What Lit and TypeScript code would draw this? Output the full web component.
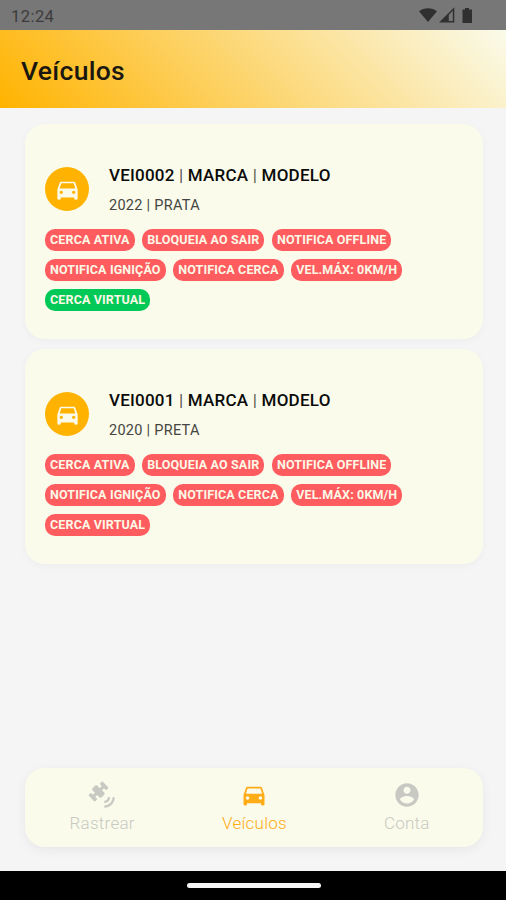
import { LitElement, html, css, svg } from "lit";
import { customElement, property } from "lit/decorators.js";

const CAR = svg`<path fill-rule="evenodd" d="M18.92 6.01C18.72 5.42 18.16 5 17.5 5h-11c-.66 0-1.21.42-1.42 1.01L3 12v8c0 .55.45 1 1 1h1c.55 0 1-.45 1-1v-1h12v1c0 .55.45 1 1 1h1c.55 0 1-.45 1-1v-8l-2.08-5.99zM6.5 16c-.83 0-1.5-.67-1.5-1.5S5.67 13 6.5 13s1.5.67 1.5 1.5S7.33 16 6.5 16zm11 0c-.83 0-1.5-.67-1.5-1.5s.67-1.5 1.5-1.5 1.5.67 1.5 1.5-.67 1.5-1.5 1.5zM5 11l1.5-4.5h11L19 11H5z"/>`;
const ACCOUNT = svg`<path d="M12 2C6.48 2 2 6.48 2 12s4.48 10 10 10 10-4.48 10-10S17.52 2 12 2zm0 3c1.66 0 3 1.34 3 3s-1.34 3-3 3-3-1.34-3-3 1.34-3 3-3zm0 14.2c-2.5 0-4.71-1.28-6-3.22.03-1.99 4-3.08 6-3.08 1.99 0 5.97 1.09 6 3.08-1.29 1.94-3.5 3.22-6 3.22z"/>`;
const SATELLITE = svg`
  <g transform="rotate(45 9 9)">
    <rect x="3.4" y="6.1" width="11" height="5.8" rx="1.4"/>
    <rect x="5" y="0.5" width="8" height="3.2" rx="1"/>
    <rect x="5" y="14.3" width="8" height="3.2" rx="1"/>
    <rect x="7.6" y="3" width="2.8" height="12"/>
  </g>
  <path d="M21 14h2c0 4.97-4.03 9-9 9v-2c3.87 0 7-3.13 7-7zM14 17v2c2.76 0 5-2.24 5-5h-2c0 1.66-1.34 3-3 3z"/>`;

interface Tag {
  text: string;
  on?: boolean;
}

@customElement("vehicle-card")
class VehicleCard extends LitElement {
  @property() code = "";
  @property() info = "";
  @property({ attribute: false }) tags: Tag[] = [];

  static styles = css`
    :host {
      display: block;
      height: 215px;
      box-sizing: border-box;
      padding: 40px 20px 0;
      border-radius: 20px;
      background: #fafbeb;
      box-shadow: 0 2px 8px rgba(0, 0, 0, 0.035);
    }
    .head { display: flex; align-items: center; height: 50px; }
    .badge {
      width: 44px; height: 44px; margin-right: 20px; border-radius: 50%;
      display: grid; place-items: center; background: #ffb300;
    }
    svg { width: 27px; height: 27px; fill: #fafbeb; display: block; }
    .text { padding-top: 3px; }
    .title { font-size: 17px; line-height: 21px; font-weight: 500; letter-spacing: 0.22px; color: #0b0b09; white-space: nowrap; }
    .bar { font-weight: 400; color: #555550; }
    .sub { font-size: 14.5px; line-height: 20px; margin-top: 10px; font-weight: 400; letter-spacing: 0.28px; color: #454541; }
    .tags { display: flex; flex-wrap: wrap; gap: 7.8px 7.6px; margin-top: 15px; }
    .tag {
      height: 22px; line-height: 22px; padding: 0 5px; border-radius: 10px;
      background: #ff5c60; color: #fbf8e6; font-size: 12.5px; font-weight: 700; letter-spacing: 0.14px; white-space: nowrap;
    }
    .on { background: #00c957; }
  `;

  render() {
    const bar = html`<span class="bar">|</span>`;
    return html`
      <div class="head">
        <div class="badge"><svg viewBox="0 0 24 24">${CAR}</svg></div>
        <div class="text">
          <div class="title">${this.code} ${bar} MARCA ${bar} MODELO</div>
          <div class="sub">${this.info}</div>
        </div>
      </div>
      <div class="tags">
        ${this.tags.map((t) => html`<span class="tag ${t.on ? "on" : ""}">${t.text}</span>`)}
      </div>
    `;
  }
}

const tagsFor = (virtualOn: boolean): Tag[] => [
  { text: "CERCA ATIVA" },
  { text: "BLOQUEIA AO SAIR" },
  { text: "NOTIFICA OFFLINE" },
  { text: "NOTIFICA IGNIÇÃO" },
  { text: "NOTIFICA CERCA" },
  { text: "VEL.MÁX: 0KM/H" },
  { text: "CERCA VIRTUAL", on: virtualOn },
];

@customElement("app-root")
class AppRoot extends LitElement {
  static styles = css`
    :host {
      display: flex; flex-direction: column; height: 900px; overflow: hidden;
      background: #f5f5f5; font-family: Roboto, sans-serif;
    }
    .status {
      height: 30px; flex: none; display: flex; justify-content: space-between; align-items: center;
      box-sizing: border-box; padding: 2px 33px 0 11px; background: #777; color: #3c3c3c; font-size: 16.5px; letter-spacing: 0.45px;
    }
    .status svg { width: 54px; height: 18px; display: block; fill: #303030; }
    header {
      height: 78px; flex: none; display: flex; align-items: center; box-sizing: border-box; padding: 2px 21px 0;
      background: linear-gradient(45deg, #ffb300, #fafbeb);
      color: #1a1710; font-size: 26.5px; font-weight: 500; letter-spacing: 0.3px;
    }
    main { flex: 1; display: flex; flex-direction: column; gap: 10px; padding: 16px 23px 0 25px; }
    nav {
      flex: none; height: 79px; margin: 0 23px 24px 25px; padding-left: 1px; box-sizing: border-box; border-radius: 20px; display: grid;
      grid-template-columns: repeat(3, 1fr); background: #fafbeb; box-shadow: 0 3px 12px rgba(0, 0, 0, 0.06);
    }
    .item { display: flex; flex-direction: column; align-items: center; padding-top: 13px; color: #c8c9c2; font-size: 17px; letter-spacing: 0.25px; font-weight: 300; }
    .item svg { width: 28px; height: 28px; fill: currentColor; display: block; }
    .item span { line-height: 20px; margin-top: 4px; }
    .active { color: #ffac16; }
    .system { flex: none; height: 29px; display: grid; place-items: center; background: #000; }
    .pill { width: 134px; height: 5px; border-radius: 3px; background: #f5f5f5; margin-left: 1px; }
  `;

  render() {
    return html`
      <div class="status">
        <span>12:24</span>
        <svg viewBox="0 0 54 18">
          <path d="M0 4.2C5 .2 13 .2 18 4.2L9 15z" />
          <path fill-rule="evenodd" d="M20 15.5L35.3 0.2v15.3zM29.8 7.7V14H33.8V3.7z" />
          <path d="M43.5 2.5h2.5V1h4v1.5H53V16h-9.5z" />
        </svg>
      </div>
      <header>Veículos</header>
      <main>
        <vehicle-card code="VEI0002" info="2022 | PRATA" .tags=${tagsFor(true)}></vehicle-card>
        <vehicle-card code="VEI0001" info="2020 | PRETA" .tags=${tagsFor(false)}></vehicle-card>
      </main>
      <nav>
        <div class="item"><svg viewBox="0 0 24 24">${SATELLITE}</svg><span>Rastrear</span></div>
        <div class="item active"><svg viewBox="0 0 24 24">${CAR}</svg><span>Veículos</span></div>
        <div class="item"><svg viewBox="0 0 24 24">${ACCOUNT}</svg><span>Conta</span></div>
      </nav>
      <div class="system"><div class="pill"></div></div>
    `;
  }
}
